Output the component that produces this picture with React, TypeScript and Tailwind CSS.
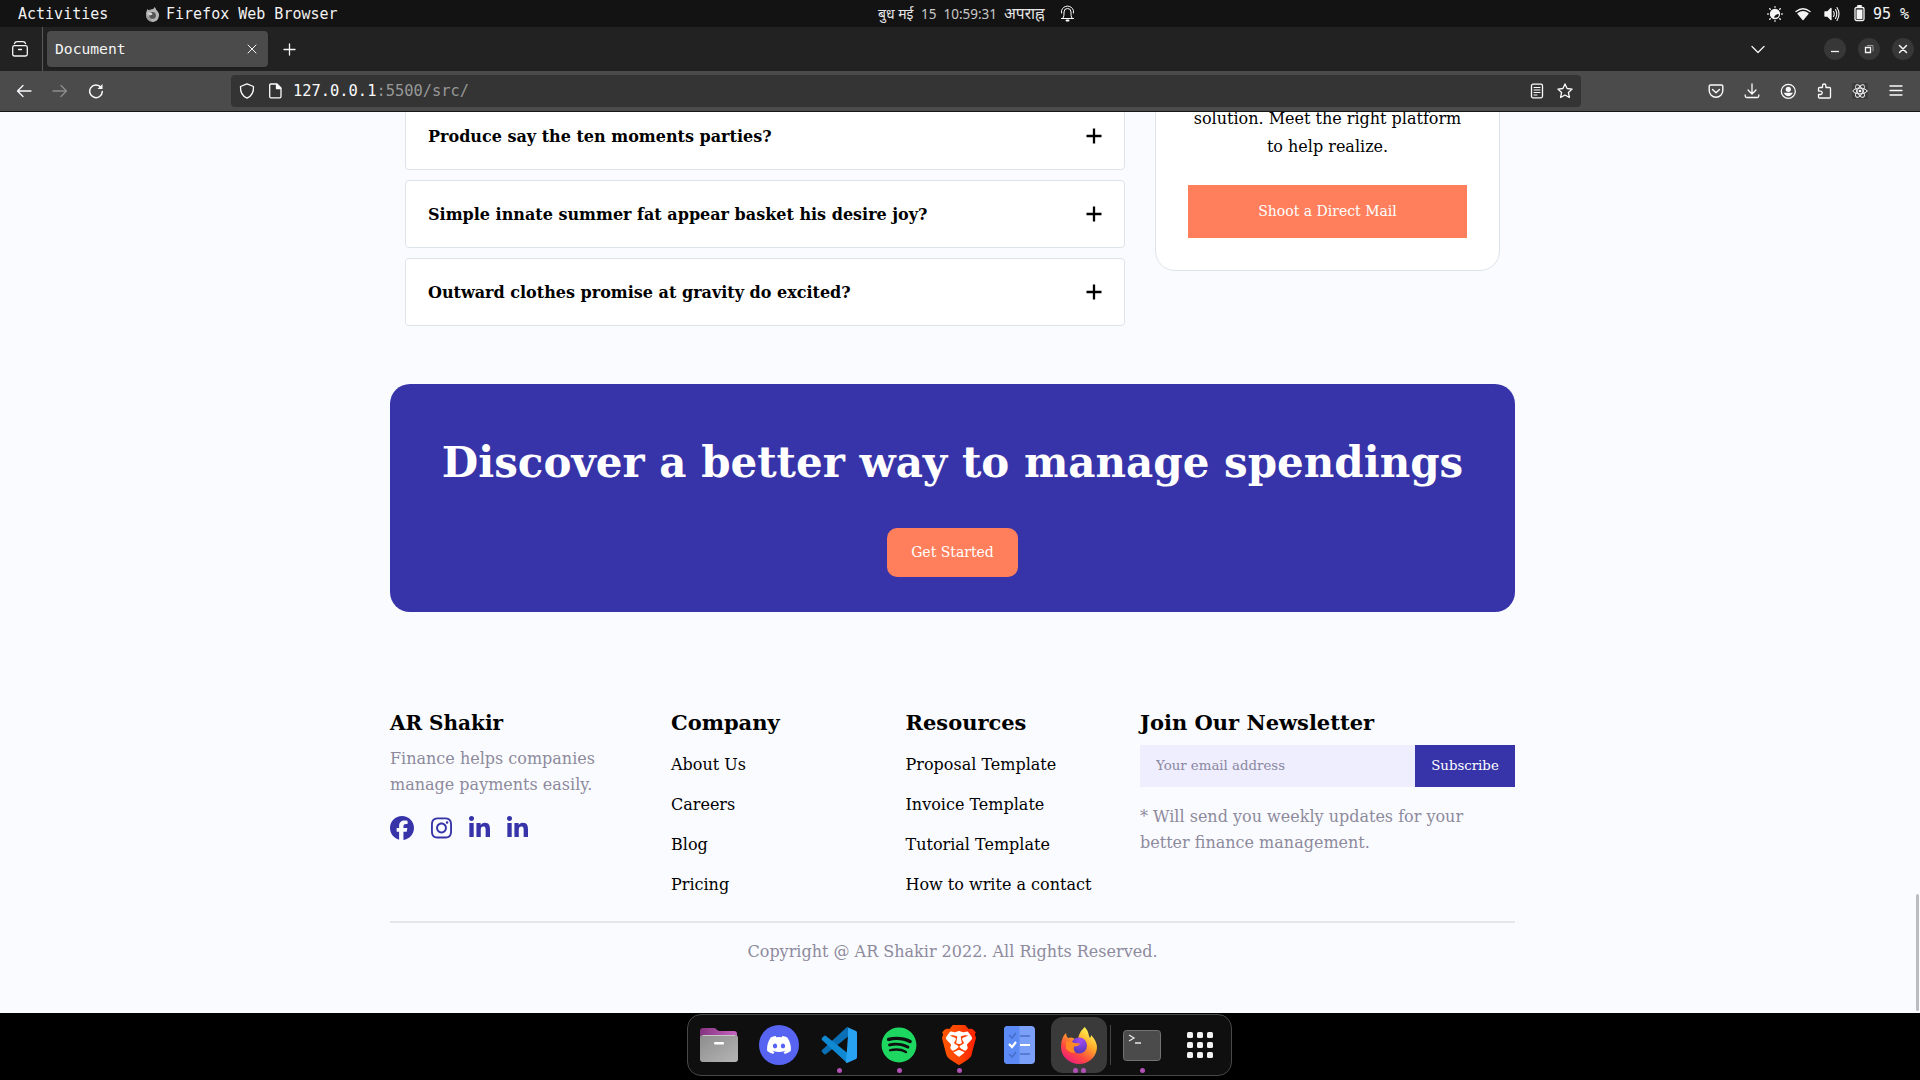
import React from "react";
import { FaFacebook, FaInstagram, FaLinkedinIn, FaDiscord, FaSpotify } from "react-icons/fa6";
import { SiBrave } from "react-icons/si";

const S = ({ w = 16, h = w, vb, children, className = "" }: { w?: number; h?: number; vb?: string; children: React.ReactNode; className?: string }) => (
  <svg width={w} height={h} viewBox={vb ?? `0 0 ${w} ${h}`} fill="none" stroke="currentColor" strokeWidth="1.3" strokeLinecap="round" strokeLinejoin="round" className={`shrink-0 ${className}`}>
    {children}
  </svg>
);

function TopBar() {
  return (
    <div className="flex h-[27px] items-center bg-[#131313] text-[15px] text-[#f2f2f2]">
      <div className="flex w-[877px] items-center pl-[18px] pt-px">
        <span className="w-[127px] font-['DejaVu_Sans_Mono',monospace]">Activities</span>
        <S w={15} vb="0 0 16 16" className="mr-[6px]">
          <circle cx="8" cy="9" r="7" fill="#9a9a9a" stroke="none" />
          <path d="M1 7 2.500 2 5 4.500 8 3 10.500 0 12 3 15 8 13 14 8 16Z" fill="#b5b5b5" stroke="none" />
          <circle cx="8" cy="9" r="3.600" fill="#555" stroke="none" />
          <path d="M3 6 7 6 8 8 5 9Z" fill="#ddd" stroke="none" />
        </S>
        <span className="font-['DejaVu_Sans_Mono',monospace]">Firefox Web Browser</span>
      </div>
      <div className="flex w-[183px] items-baseline whitespace-pre pl-px font-['Noto_Sans','Noto_Sans_Devanagari',sans-serif] text-[14px] text-[#e4e4e4]">
        <span className="w-[43px]">बुध मई</span>
        <span className="w-[83px] text-[13.500px] text-[#c8c8c8]">{"15  10:59:31"}</span>
        <span className="text-[15.500px] leading-5">अपराह्न</span>
      </div>
      <S w={15} h={17} className="text-white">
        <g strokeWidth="1">
          <path d="M3 13c1-1.500 1-3 1-6a3.500 3.500 0 0 1 7 0c0 3 0 4.500 1 6M1.500 13.500h12" />
          <path d="M3.500 2.500Q7.500-.5 11.500 2.500M1.500 8Q1 5 2.500 3.500M13.500 8Q14 5 12.500 3.500" />
        </g>
        <path d="M6.500 15.500h2" strokeWidth="1.800" />
      </S>
      <div className="ml-auto flex items-center pr-[11px] text-[#f5f5f5]">
        <S className="mr-3" w={16}>
          <circle cx="8" cy="8" r="4.500" />
          <path d="M8 3.500a4.500 4.500 0 1 0 4.500 5.500Q8 9 8 3.500Z" fill="currentColor" stroke="none" transform="rotate(90 8 8)" />
          <path d="M8 .7v.6M8 14.700v.6M.7 8h.6M14.700 8h.6M2.700 2.700l.6.6M12.700 12.700l.6.6M2.700 13.300l.6-.6M12.700 3.300l.6-.6" />
        </S>
        <S w={16} h={14} className="mr-[13px]">
          <path d="M1 4.500Q8-1 15 4.500" />
          <path d="M3 6.500Q8 3 13 6.500L8 12.500Z" fill="currentColor" />
        </S>
        <S w={16} className="mr-[14px]">
          <path d="M1 6h2.500L7 2.500v11L3.500 10H1Z" fill="currentColor" />
          <path d="M9.500 5.500Q11 8 9.500 10.500M11.500 3.500Q14 8 11.500 12.500M13 1.500Q17 8 13 14.500" strokeWidth="1.100" />
        </S>
        <S w={11} h={17} className="mr-2">
          <rect x="1" y="2.500" width="9" height="13" rx="1.500" />
          <path d="M4 1h3" strokeWidth="2" />
          <rect x="2.500" y="4.500" width="6" height="9.500" fill="currentColor" stroke="none" />
        </S>
        <span className="pt-px font-['DejaVu_Sans_Mono',monospace]">95 %</span>
      </div>
    </div>
  );
}

function TabStrip() {
  return (
    <div className="flex h-11 items-center bg-[#222222] text-[#f5f5f5]">
      <div className="flex h-full w-[43px] items-center border-r border-[#585858] pl-3">
        <S w={16}>
          <rect x=".7" y="4.700" width="14.600" height="10.300" rx="1.800" />
          <path d="M2.500 2.700Q3 .7 5 .7h6q2 0 2.500 2M6.500 8.500h3" />
        </S>
      </div>
      <div className="ml-1 flex h-9 w-[221px] items-center justify-between rounded bg-[#4b4b4b] pl-2 pr-[11px] shadow">
        <span className="font-['DejaVu_Sans_Mono',monospace] text-[14.667px]">Document</span>
        <S w={10}><path d="M1 1l8 8M9 1l-8 8" strokeWidth="1" /></S>
      </div>
      <S w={13} className="ml-[15px]"><path d="M6.500 1v11M1 6.500h11" /></S>
      <S w={14} h={9} className="ml-auto"><path d="M1 1.500l6 6 6-6" /></S>
      <div className="ml-[59px] mr-[6px] flex gap-3">
        <span className="flex size-[22px] items-center justify-center rounded-full bg-[#373737]"><S w={10}><path d="M1 7.500h8" strokeLinecap="butt" /></S></span>
        <span className="flex size-[22px] items-center justify-center rounded-full bg-[#373737]"><S w={10}><path d="M1.500 3.500h5v5h-5Z" strokeLinejoin="miter" /><path d="M3.500 1.500h5.500V7" stroke="#999" strokeWidth="1" /></S></span>
        <span className="flex size-[22px] items-center justify-center rounded-full bg-[#373737]"><S w={10}><path d="M1.500 1.500l7 7M8.500 1.500l-7 7" strokeWidth="1.500" /></S></span>
      </div>
    </div>
  );
}

function Toolbar() {
  return (
    <div className="flex h-[41px] items-center border-b border-[#161616] bg-[#4b4b4b] text-[#fbfbfe]">
      <S className="ml-4"><path d="M15 8H1.500M7 2.500 1.500 8 7 13.500" /></S>
      <S className="ml-5 text-[#8d8d8d]"><path d="M1 8h13.500M9 2.500 14.500 8 9 13.500" /></S>
      <S className="ml-5"><path d="M13 4.500A6.300 6.300 0 1 0 14.300 8.500" strokeWidth="1.500" /><path d="M14.500 1v5h-5Z" fill="currentColor" stroke="none" /></S>
      <div className="ml-[127px] flex h-8 w-[1350px] items-center rounded bg-[#343434] pl-2 pr-2">
        <S><path d="M8 .9 14.500 3.500Q15 12 8 15.200Q1 12 1.500 3.500Z" /></S>
        <S className="ml-[12px]"><path d="M4 1h6l4 4v8.500q0 1.300-1.300 1.300H4q-1.300 0-1.300-1.300V2.300Q2.700 1 4 1Z" /><path d="M9.500 1.500v4h4Z" fill="currentColor" /></S>
        <span className="ml-[10px] pt-px font-['DejaVu_Sans_Mono',monospace] text-[15.400px] text-[#989898]"><span className="text-[#fbfbfe]">127.0.0.1</span>:5500/src/</span>
        <S className="ml-auto"><rect x="2.500" y="1.200" width="11" height="13.600" rx="1.500" /><path d="M5 4.500h6M5 7h6M5 9.500h6M5 12h3" strokeWidth="1" /></S>
        <S className="ml-3"><path d="M8 .9l2.100 4.600 5 .6-3.700 3.400 1 5L8 12l-4.400 2.500 1-5L.9 6.100l5-.6Z" /></S>
      </div>
      <div className="ml-auto mr-4 flex gap-5">
        <S><path d="M2.500 2h11q1.300 0 1.300 1.300V7.500a6.800 6.800 0 0 1-13.600 0V3.300Q1.200 2 2.500 2ZM4.500 6.500 8 9.800l3.500-3.300" strokeWidth="1.400" /></S>
        <S><path d="M8 .8v10M4 7l4 4 4-4M1.200 12v1q0 1.500 1.500 1.500h10.600q1.500 0 1.500-1.500v-1" /></S>
        <S><circle cx="8.300" cy="8.300" r="7" /><circle cx="8.300" cy="6.300" r="2.600" fill="currentColor" stroke="none" /><path d="M3.800 9.800h9Q11.300 13.200 8.300 13.200T3.800 9.800Z" fill="currentColor" stroke="none" /></S>
        <S><path d="M2.500 6.500V5.500q0-1 1-1h3V2.700a1.700 1.700 0 0 1 3.400 0V4.500H13.500q1 0 1 1v8.500q0 1-1 1H3.500q-1 0-1-1v-2.500h2a1.700 1.700 0 0 0 0-3.400H2.500Z" /></S>
        <span className="size-4 bg-[#3d3d3d]"><S><g strokeWidth=".9"><ellipse cx="8" cy="8" rx="7" ry="2.800" /><ellipse cx="8" cy="8" rx="7" ry="2.800" transform="rotate(60 8 8)" /><ellipse cx="8" cy="8" rx="7" ry="2.800" transform="rotate(120 8 8)" /></g><circle cx="8" cy="8" r="1.300" fill="currentColor" stroke="none" /></S></span>
        <S><path d="M2 3h12M2 7.500h12M2 12h12" /></S>
      </div>
    </div>
  );
}

const questions = ["Produce say the ten moments parties?", "Simple innate summer fat appear basket his desire joy?", "Outward clothes promise at gravity do excited?"];

function Faq() {
  return (
    <section className="flex h-[258px] items-end gap-[30px] pl-[15px]">
      <div className="mb-[44px] flex w-[720px] flex-col gap-[10px]">
        {questions.map((q) => (
          <div key={q} className="flex h-[68px] shrink-0 items-center justify-between rounded border border-[#dce4ea] bg-white px-[22px]">
            <span className="pt-0.5 font-bold">{q}</span>
            <S w={16} className="-mt-px text-black"><path d="M8 .5v15M.5 8h15" strokeWidth="2.300" strokeLinecap="butt" /></S>
          </div>
        ))}
      </div>
      <div className="mb-[99px] flex h-[230px] w-[345px] flex-col justify-end rounded-[20px] border border-[#dce4ea] bg-white px-8 pb-8 text-center">
        <p className="mb-6 leading-7">solution. Meet the right platform<br />to help realize.</p>
        <button className="h-[53px] shrink-0 bg-[#ff7f5c] text-[14px] text-white">Shoot a Direct Mail</button>
      </div>
    </section>
  );
}

function Column({ title, items, width }: { title: string; items: string[]; width: string }) {
  return (
    <div className={width}>
      <h3 className="text-[21px] font-bold leading-[30px]">{title}</h3>
      <ul className="mt-[7px] leading-10">
        {items.map((i) => <li key={i} className="h-10">{i}</li>)}
      </ul>
    </div>
  );
}

function Footer() {
  return (
    <footer className="mt-[96px] leading-[26px]">
      <div className="flex h-[215px] border-b-2 border-[#e5e6ea]">
        <div className="w-[281px]">
          <h3 className="text-[20px] font-bold leading-[30px]">AR Shakir</h3>
          <p className="mt-[8px] text-[#8d8a9c]">Finance helps companies<br />manage payments easily.</p>
          <div className="mt-[18px] flex gap-[17px] text-2xl text-[#3734a9]">
            <FaFacebook />
            <FaInstagram className="w-[21px]" />
            <FaLinkedinIn className="w-[21px]" />
            <FaLinkedinIn className="w-[21px]" />
          </div>
        </div>
        <Column width="w-[234.500px]" title="Company" items={["About Us", "Careers", "Blog", "Pricing"]} />
        <Column width="w-[234.500px]" title="Resources" items={["Proposal Template", "Invoice Template", "Tutorial Template", "How to write a contact"]} />
        <div className="w-[375px]">
          <h3 className="text-[21px] font-bold leading-[30px]">Join Our Newsletter</h3>
          <div className="mt-[7px] flex h-[42px] text-[13.333px]">
            <input placeholder="Your email address" className="w-[275px] bg-[#efeefe] px-4 placeholder:text-[#8a87a0]" />
            <button className="w-[100px] bg-[#3734a9] text-white">Subscribe</button>
          </div>
          <p className="mt-[17px] text-[#8d8a9c]">* Will send you weekly updates for your<br />better finance management.</p>
        </div>
      </div>
      <p className="mt-4 text-center text-[#8d8a9c]">Copyright @ AR Shakir 2022. All Rights Reserved.</p>
    </footer>
  );
}

function VsCode() {
  return (
    <svg width="36" height="36" viewBox="0 0 36 36">
      <path d="M26 0 1 23q-1 1 0 2l2 2q1 1 2 0L29 8Z" fill="#0b6fb5" />
      <path d="M26 36 1 13q-1-1 0-2l2-2q1-1 2 0l24 19Z" fill="#1089d3" />
      <path d="M26 0l9 4q1 .5 1 2v24q0 1.500-1 2l-9 4q-1 0-1-1L27 9V2Z" fill="#27a3f2" />
    </svg>
  );
}

function Firefox() {
  return (
    <svg width="36" height="37" viewBox="0 0 36 37">
      <defs>
        <linearGradient id="fx" x1=".85" y1="0" x2=".2" y2="1"><stop offset=".1" stopColor="#fff04f" /><stop offset=".4" stopColor="#ffa72a" /><stop offset=".7" stopColor="#ff4a3f" /><stop offset="1" stopColor="#e81586" /></linearGradient>
        <radialGradient id="fp" cx=".6" cy=".2" r=".8"><stop stopColor="#a64bf0" /><stop offset="1" stopColor="#5239b8" /></radialGradient>
      </defs>
      <path d="M2 10q1-2 3-4 0 3 2 5 3-1 5 0 3 2 5 1 1-5 3-8Q22 2 23.500 0q3.500 3 4.500 9l1 2q1-1 1-3 6 6 6 13C35 31 27 37 18 37S0 30 0 20Q0 14 2 10Z" fill="url(#fx)" />
      <circle cx="18" cy="18.500" r="8" fill="url(#fp)" />
      <path d="M5 15q4-2 8 1 4 0 6 .5-1 3-6 3-1 4 2 6-7 1-10-4Z" fill="#ff8a24" />
    </svg>
  );
}

function Dock() {
  const cell = "relative flex h-[60px] w-[60px] shrink-0 items-center justify-center";
  const dot = <i className="absolute bottom-[2px] left-[28px] size-[5px] rounded-full bg-[#b252b5]" />;
  return (
    <div className="flex h-[67px] justify-center bg-black">
      <div className="mr-[1px] mt-[1px] flex h-[62px] w-[545px] rounded-[14px] border border-[#484848] bg-[#0f0f0f]">
        <div className={`${cell} ml-[1px]`}>
          <svg width="38" height="34" viewBox="0 0 38 34">
            <defs>
              <linearGradient id="fg" x1="0" y1="0" x2="1" y2="1"><stop stopColor="#8d8d8d" /><stop offset="1" stopColor="#b5b5b5" /></linearGradient>
              <linearGradient id="fm"><stop stopColor="#84337f" /><stop offset="1" stopColor="#c766c1" /></linearGradient>
            </defs>
            <path d="M0 10V3q0-3 3-3h11q2 0 3 2l2 1h15q3 0 3 3v6Z" fill="url(#fm)" />
            <rect y="7" width="38" height="27" rx="3" fill="url(#fg)" /><path d="M3 7.500h32" stroke="#c8c8c8" />
            <rect x="14" y="14" width="10" height="2.500" rx="1" fill="#fff" />
          </svg>
        </div>
        <div className={cell}><span className="flex size-10 items-center justify-center rounded-full bg-[#5764f2]"><FaDiscord className="size-[26px] text-white" /></span></div>
        <div className={cell}><VsCode />{dot}</div>
        <div className={cell}><FaSpotify className="size-[36px] text-[#1ed760]" />{dot}</div>
        <div className={cell}>
          <div className="grid place-items-center">
            <svg width="40" height="40" viewBox="0 0 24 24" className="col-start-1 row-start-1">
              <defs><linearGradient id="br"><stop stopColor="#ff5601" /><stop offset=".5" stopColor="#ff4500" /><stop offset="1" stopColor="#ff1f01" /></linearGradient></defs>
              <path d="M6 3h12l2.500 4-2 8-6.500 6-6.500-6-2-8Z" fill="#fff" />
            </svg>
            <SiBrave size={40} className="col-start-1 row-start-1" style={{ fill: "url(#br)" }} />
          </div>
          {dot}
        </div>
        <div className={cell}>
          <svg width="31" height="38" viewBox="0 0 31 38" fill="none" className="rounded-[4px]">
            <path d="M0 0H31V38H0Z" fill="#7ba0f7" /><path d="M0 0H15.500V38H0Z" fill="#5c8bf5" />
            <path d="M5 9l3 3 4-5M5 28l3 3 4-5M16 10h10M16 28h10" stroke="#4770cc" strokeWidth="1.700" />
            <path d="M5 18l3 3 4-5M16 19h10" stroke="#fff" strokeWidth="2.200" />
          </svg>
        </div>
        <div className="relative ml-[2px] mt-[2px] flex h-[56px] w-[56px] shrink-0 items-center justify-center rounded-xl bg-[#3a3a3a]">
          <Firefox />
          <i className="absolute bottom-0 left-[22px] size-[5px] rounded-full bg-[#b252b5]" />
          <i className="absolute bottom-0 left-[29.500px] size-[5px] rounded-full bg-[#b252b5]" />
        </div>
        <div className="ml-[3px] mt-[10px] h-10 w-px bg-[#444]" />
        <div className={`${cell} ml-px`}>
          <svg width="38" height="31" viewBox="0 0 38 31" fill="none">
            <rect x=".5" y=".5" width="37" height="30" rx="3" fill="#4b4b4b" stroke="#737373" />
            <path d="M6 5l5 3-5 3M12 13h6" stroke="#e8e8e8" strokeWidth="1.300" />
          </svg>
          {dot}
        </div>
        <div className="flex h-[60px] w-[56px] items-center justify-center">
          <div className="grid grid-cols-3 gap-1">
            {Array.from({ length: 9 }, (_, i) => <i key={i} className="size-[6px] rounded-[1.500px] bg-[#f2f2f2]" />)}
          </div>
        </div>
      </div>
    </div>
  );
}

export default function App() {
  return (
    <div className="flex h-[1080px] w-[1920px] flex-col overflow-hidden">
      <TopBar />
      <TabStrip />
      <Toolbar />
      <main className="relative h-[901px] overflow-hidden bg-[#fafbff] pl-[390px] font-['DejaVu_Serif',serif] text-[16px] text-black">
        <div className="w-[1125px]">
          <Faq />
          <section className="mt-[14px] flex h-[228px] flex-col items-center rounded-[20px] bg-[#3734a9] text-white">
            <h2 className="mt-[47px] whitespace-nowrap text-[42px] font-bold leading-[63px]">Discover a better way to manage spendings</h2>
            <button className="mt-[34px] h-[49px] w-[131px] rounded-[10px] bg-[#ff7f5c] text-[14px]">Get Started</button>
          </section>
          <Footer />
        </div>
        <div className="absolute bottom-[2px] right-px h-[117px] w-[3px] rounded bg-[#bbbcbe]" />
      </main>
      <Dock />
    </div>
  );
}
